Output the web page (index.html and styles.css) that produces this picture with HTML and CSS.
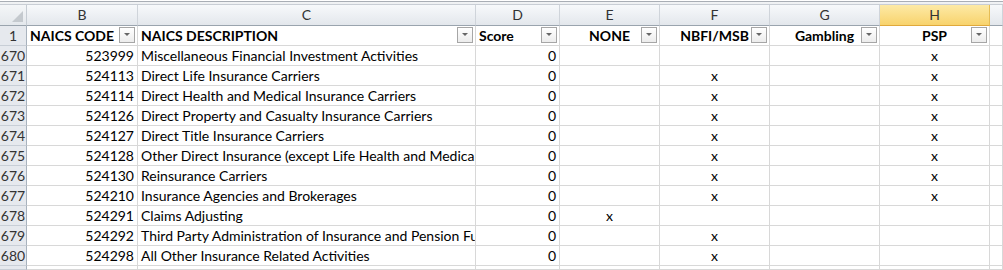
FILE: index.html
```html
<!DOCTYPE html>
<html>
<head>
<meta charset="utf-8">
<link rel="stylesheet" href="styles.css">
</head>
<body>
<div class="topstrip"></div>
<div class="sheet">
  <div class="corner"><span class="tri"></span></div>
  <div class="colhead">B</div>
  <div class="colhead">C</div>
  <div class="colhead">D</div>
  <div class="colhead">E</div>
  <div class="colhead">F</div>
  <div class="colhead">G</div>
  <div class="colhead active">H</div>
  <div class="colhead"></div>

  <div class="rowhead">1</div>
  <div class="cell hdr left">NAICS CODE<span class="fb"></span></div>
  <div class="cell hdr left">NAICS DESCRIPTION<span class="fb"></span></div>
  <div class="cell hdr left">Score<span class="fb"></span></div>
  <div class="cell hdr ctr">NONE<span class="fb"></span></div>
  <div class="cell hdr ctr">NBFI/MSB<span class="fb"></span></div>
  <div class="cell hdr ctr">Gambling<span class="fb"></span></div>
  <div class="cell hdr ctr">PSP<span class="fb"></span></div>
  <div class="cell"></div>

  <div class="rowhead">670</div><div class="cell num">523999</div><div class="cell txt">Miscellaneous Financial Investment Activities</div><div class="cell num">0</div><div class="cell ctr"></div><div class="cell ctr"></div><div class="cell ctr"></div><div class="cell ctr">x</div><div class="cell"></div>
  <div class="rowhead">671</div><div class="cell num">524113</div><div class="cell txt">Direct Life Insurance Carriers</div><div class="cell num">0</div><div class="cell ctr"></div><div class="cell ctr">x</div><div class="cell ctr"></div><div class="cell ctr">x</div><div class="cell"></div>
  <div class="rowhead">672</div><div class="cell num">524114</div><div class="cell txt">Direct Health and Medical Insurance Carriers</div><div class="cell num">0</div><div class="cell ctr"></div><div class="cell ctr">x</div><div class="cell ctr"></div><div class="cell ctr">x</div><div class="cell"></div>
  <div class="rowhead">673</div><div class="cell num">524126</div><div class="cell txt">Direct Property and Casualty Insurance Carriers</div><div class="cell num">0</div><div class="cell ctr"></div><div class="cell ctr">x</div><div class="cell ctr"></div><div class="cell ctr">x</div><div class="cell"></div>
  <div class="rowhead">674</div><div class="cell num">524127</div><div class="cell txt">Direct Title Insurance Carriers</div><div class="cell num">0</div><div class="cell ctr"></div><div class="cell ctr">x</div><div class="cell ctr"></div><div class="cell ctr">x</div><div class="cell"></div>
  <div class="rowhead">675</div><div class="cell num">524128</div><div class="cell txt">Other Direct Insurance (except Life Health and Medical)</div><div class="cell num">0</div><div class="cell ctr"></div><div class="cell ctr">x</div><div class="cell ctr"></div><div class="cell ctr">x</div><div class="cell"></div>
  <div class="rowhead">676</div><div class="cell num">524130</div><div class="cell txt">Reinsurance Carriers</div><div class="cell num">0</div><div class="cell ctr"></div><div class="cell ctr">x</div><div class="cell ctr"></div><div class="cell ctr">x</div><div class="cell"></div>
  <div class="rowhead">677</div><div class="cell num">524210</div><div class="cell txt">Insurance Agencies and Brokerages</div><div class="cell num">0</div><div class="cell ctr"></div><div class="cell ctr">x</div><div class="cell ctr"></div><div class="cell ctr">x</div><div class="cell"></div>
  <div class="rowhead">678</div><div class="cell num">524291</div><div class="cell txt">Claims Adjusting</div><div class="cell num">0</div><div class="cell ctr">x</div><div class="cell ctr"></div><div class="cell ctr"></div><div class="cell ctr"></div><div class="cell"></div>
  <div class="rowhead">679</div><div class="cell num">524292</div><div class="cell txt">Third Party Administration of Insurance and Pension Funds</div><div class="cell num">0</div><div class="cell ctr"></div><div class="cell ctr">x</div><div class="cell ctr"></div><div class="cell ctr"></div><div class="cell"></div>
  <div class="rowhead">680</div><div class="cell num">524298</div><div class="cell txt">All Other Insurance Related Activities</div><div class="cell num">0</div><div class="cell ctr"></div><div class="cell ctr">x</div><div class="cell ctr"></div><div class="cell ctr"></div><div class="cell"></div>
  <div class="rowhead"></div><div class="cell"></div><div class="cell"></div><div class="cell"></div><div class="cell"></div><div class="cell"></div><div class="cell"></div><div class="cell"></div><div class="cell"></div>
</div>
</body>
</html>
```
FILE: styles.css
```css
html, body {
  margin: 0;
  padding: 0;
  background: #ffffff;
  overflow: hidden;
}
body {
  width: 1003px;
  height: 270px;
  font-family: Lato, "Noto Sans", sans-serif;
  font-size: 14px;
  color: #000;
}
.topstrip {
  height: 5px;
  box-sizing: border-box;
  border-top: 1px solid #ffffff;
  background: linear-gradient(#a9aeb5 0, #a9aeb5 1px, #f1f3f5 1px, #eef0f2 100%);
  border-bottom: 1px solid #c9ced5;
}
.sheet {
  display: grid;
  height: 265px;
  overflow: hidden;
  grid-template-columns: 27px 111px 338px 84px 100px 110px 110px 110px 1fr;
  grid-template-rows: 21px repeat(12, 20px) 4px;
}
.sheet > div {
  box-sizing: border-box;
  white-space: nowrap;
  overflow: hidden;
  line-height: 19px;
}
.corner {
  position: relative;
  background: linear-gradient(#f4f6f8, #e4e8ec);
  border-right: 1px solid #c6ccd3;
  border-bottom: 1px solid #9aa4ae;
}
.corner .tri {
  position: absolute;
  right: 3px;
  bottom: 3px;
  width: 0;
  height: 0;
  border-left: 11px solid transparent;
  border-bottom: 11px solid #c4c9ce;
}
.colhead {
  background: linear-gradient(#f7f9fb, #e3e7ec);
  border-right: 1px solid #cfd4da;
  border-bottom: 1px solid #9aa4ae;
  text-align: center;
  color: #333;
  line-height: 20px !important;
}
.colhead.active {
  background: linear-gradient(#fdeaa6, #f8d36d);
  border-right: 1px solid #e6bd55;
  border-bottom: 1px solid #e0a93b;
}
.rowhead {
  background: #e6e9ee;
  border-right: 1px solid #a8b2bd;
  border-bottom: 1px solid #c8ced6;
  text-align: center;
  color: #333;
}
.cell {
  position: relative;
  border-right: 1px solid #d8d8d8;
  border-bottom: 1px solid #d8d8d8;
  padding: 0 3px;
}
.hdr {
  font-weight: bold;
}
.left { text-align: left; }
.ctr { text-align: center; }
.num { text-align: right; }
.txt { text-align: left; }
.fb {
  position: absolute;
  right: 2px;
  top: 1px;
  width: 16px;
  height: 16px;
  box-sizing: border-box;
  border: 1px solid #a6a6a6;
  background: linear-gradient(#ffffff, #ececec);
}
.fb::after {
  content: "";
  position: absolute;
  left: 4px;
  top: 5px;
  width: 0;
  height: 0;
  border-left: 3px solid transparent;
  border-right: 3px solid transparent;
  border-top: 3px solid #666;
}
```
